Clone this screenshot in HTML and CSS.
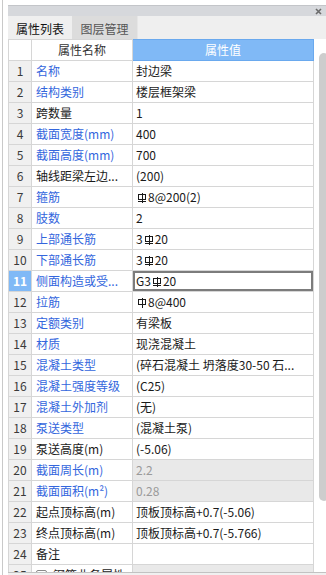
FILE: index.html
```html
<!DOCTYPE html>
<html lang="zh-CN">
<head>
  <meta charset="utf-8" />
  <meta name="viewport" content="width=device-width,initial-scale=1" />
  <title>属性列表</title>
  <link rel="stylesheet" href="styles.css">
</head>
<body>
  <svg class="defs" width="0" height="0" aria-hidden="true">
    <symbol id="grade3" viewBox="0 0 10 11">
      <path d="M5 0.5V10.5M1.5 2.5H8.5V7H1.5ZM1 9.5H9" fill="none" stroke="#1a1a1a" stroke-width="1"/>
    </symbol>
    <symbol id="grade1" viewBox="0 0 10 11">
      <path d="M5 0.5V10.5M1.5 2.5H8.5V7.5H1.5Z" fill="none" stroke="#1a1a1a" stroke-width="1"/>
    </symbol>
  </svg>

  <div class="shell">
    <div class="panel">
      <div class="titlebar">
        <svg class="close" width="7" height="7" viewBox="0 0 7 7"><path d="M1 1L6 6M6 1L1 6" stroke="#6b6b6b" stroke-width="1.6"/></svg>
      </div>
      <div class="tabs">
        <div class="tab active">属性列表</div>
        <div class="tab">图层管理</div>
      </div>

      <div class="grid-wrap">
        <table class="props">
          <colgroup><col class="c-no"><col class="c-name"><col class="c-val"></colgroup>
          <thead>
            <tr><th class="no"></th><th>属性名称</th><th class="val-head">属性值</th></tr>
          </thead>
          <tbody>
            <tr><td class="no">1</td><td class="name link">名称</td><td>封边梁</td></tr>
            <tr><td class="no">2</td><td class="name link">结构类别</td><td>楼层框架梁</td></tr>
            <tr><td class="no">3</td><td class="name">跨数量</td><td>1</td></tr>
            <tr><td class="no">4</td><td class="name link">截面宽度(mm)</td><td>400</td></tr>
            <tr><td class="no">5</td><td class="name link">截面高度(mm)</td><td>700</td></tr>
            <tr><td class="no">6</td><td class="name">轴线距梁左边...</td><td>(200)</td></tr>
            <tr><td class="no">7</td><td class="name link">箍筋</td><td><svg class="gr"><use href="#grade3"/></svg>8@200(2)</td></tr>
            <tr><td class="no">8</td><td class="name link">肢数</td><td>2</td></tr>
            <tr><td class="no">9</td><td class="name link">上部通长筋</td><td>3<svg class="gr"><use href="#grade3"/></svg>20</td></tr>
            <tr><td class="no">10</td><td class="name link">下部通长筋</td><td>3<svg class="gr"><use href="#grade3"/></svg>20</td></tr>
            <tr class="current"><td class="no">11</td><td class="name link">侧面构造或受...</td><td class="editing">G3<svg class="gr"><use href="#grade3"/></svg>20</td></tr>
            <tr><td class="no">12</td><td class="name link">拉筋</td><td><svg class="gr"><use href="#grade1"/></svg>8@400</td></tr>
            <tr><td class="no">13</td><td class="name link">定额类别</td><td>有梁板</td></tr>
            <tr><td class="no">14</td><td class="name link">材质</td><td>现浇混凝土</td></tr>
            <tr><td class="no">15</td><td class="name link">混凝土类型</td><td>(碎石混凝土 坍落度30-50 石...</td></tr>
            <tr><td class="no">16</td><td class="name link">混凝土强度等级</td><td>(C25)</td></tr>
            <tr><td class="no">17</td><td class="name link">混凝土外加剂</td><td>(无)</td></tr>
            <tr><td class="no">18</td><td class="name link">泵送类型</td><td>(混凝土泵)</td></tr>
            <tr><td class="no">19</td><td class="name">泵送高度(m)</td><td>(-5.06)</td></tr>
            <tr><td class="no">20</td><td class="name link">截面周长(m)</td><td class="readonly">2.2</td></tr>
            <tr><td class="no">21</td><td class="name link">截面面积(m²)</td><td class="readonly">0.28</td></tr>
            <tr><td class="no">22</td><td class="name">起点顶标高(m)</td><td>顶板顶标高+0.7(-5.06)</td></tr>
            <tr><td class="no">23</td><td class="name">终点顶标高(m)</td><td>顶板顶标高+0.7(-5.766)</td></tr>
            <tr><td class="no">24</td><td class="name">备注</td><td></td></tr>
            <tr class="group"><td class="no">25</td><td class="name"><span class="expander"></span>钢筋业务属性</td><td class="readonly"></td></tr>
          </tbody>
        </table>
        <div class="vscroll"><div class="thumb"></div></div>
      </div>
    </div>
  </div>
</body>
</html>
```

FILE: styles.css
```css
:root{
  --line:#d6d6d6;
  --head-blue:#80b9f6;
  --link:#3366dd;
  --text:#1a1a1a;
}

html,body{height:100%}
body{
  margin:0; background:#fff; color:var(--text);
  font-family:"Noto Sans CJK SC","Microsoft YaHei",sans-serif;
  font-size:12px;
}

.defs{position:absolute;}

.shell{
  height:575px; overflow:hidden; box-sizing:border-box;
  margin-left:2px; border-left:1px solid #c9c9c9;
  padding:5px 0 0 5px;
}

.panel{
  height:100%; background:#f0f0f0;
  border-top:1px solid #c3c5c9;
  display:flex; flex-direction:column;
}

.titlebar{
  height:10px; background:#d6d8dc;
  display:flex; align-items:center; justify-content:flex-end;
  padding-right:4px;
}

.tabs{ height:23px; display:flex; background:#efefef; }
.tab{
  display:flex; align-items:center; justify-content:center;
  padding-top:2px; box-sizing:border-box;
  font-size:12px; color:#555;
}
.tab.active{ width:64px; color:#111; background:#efefef; }
.tab:not(.active){ width:66px; background:#dcdcdc; border-right:1px solid #e6e6e6; box-sizing:border-box; }

.grid-wrap{
  height:533px; flex:none; display:flex; overflow:hidden;
  background:#fff; border-bottom:1px solid #c2c2c2;
}

.props{
  width:305px; flex:none; table-layout:fixed;
  border-collapse:collapse; align-self:flex-start;
}
.c-no{width:23px}
.c-name{width:101px}
.c-val{width:181px}

.props th,.props td{
  height:21px; padding:0 3px; box-sizing:border-box;
  border:1px solid var(--line);
  line-height:20px; white-space:nowrap; overflow:hidden;
  text-align:left; font-weight:normal;
}
.props th{ text-align:center; color:#333; }
.props th.val-head{ background:var(--head-blue); color:#fff; border-color:#6aa9ee; }

.props td.no{ background:#f0f0f0; color:#3a3a3a; text-align:center; padding:0; }
.props td.name{ padding-left:4px; }
.props td.link{ color:var(--link); }

.props tr.current td.no{ background:var(--head-blue); color:#fff; font-weight:bold; }
.props td.editing{ box-shadow:inset 0 0 0 2px #7c7c7c; }
.props td.readonly{ background:#e9e9e9; color:#9a9a9a; }

.expander{
  display:inline-block; width:9px; height:9px;
  border:1px solid #8a8a8a; border-radius:2px; background:#fff;
  vertical-align:-1px; margin:0 6px 0 0;
}

.gr{
  width:10px; height:11px; vertical-align:-1px; margin:0 1px;
  shape-rendering:crispEdges;
}

.vscroll{ flex:1; padding:14px 0 0 5px; }
.thumb{
  width:10px; height:448px; border-radius:5px;
  background:#cdcdcd;
}
```
